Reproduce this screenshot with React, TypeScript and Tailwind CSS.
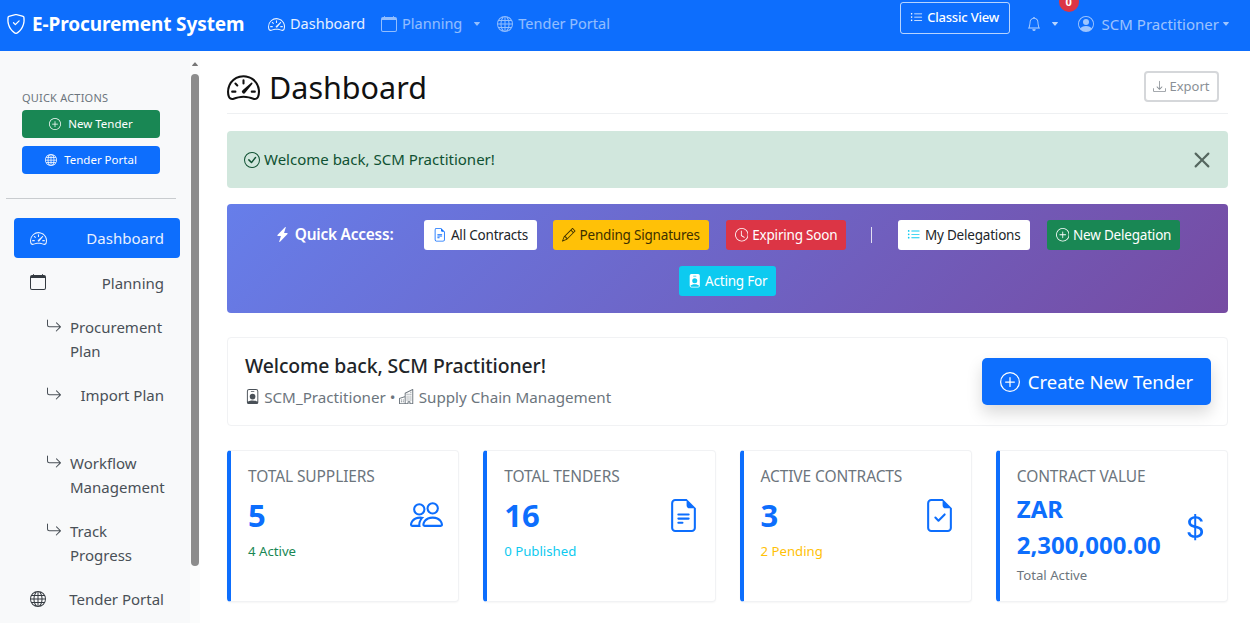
import React from "react";
import {
  BsShieldCheck, BsSpeedometer2, BsCalendar, BsGlobe, BsCaretDownFill, BsListUl, BsBell, BsPersonCircle,
  BsPlusCircle, BsArrowReturnRight, BsDownload, BsCheckCircle, BsLightningChargeFill, BsFileEarmarkText,
  BsPencil, BsClock, BsPersonBadgeFill, BsPersonBadge, BsBuildings, BsPeople, BsFileEarmarkCheck, BsCurrencyDollar, BsX, BsCaretUpFill,
} from "react-icons/bs";

function SubItem({ label, right }: { label: string; right?: boolean }) {
  return (
    <div className="h-[68px] pl-[46px] pr-[26px] py-[10px] flex items-start text-[#495057] text-[15px] leading-[24px]">
      <BsArrowReturnRight className="text-[16px] mt-[3px] shrink-0" />
      {right ? <span className="ml-auto">{label}</span> : <span className="ml-[8px]">{label}</span>}
    </div>
  );
}

function Stat({ title, children, sub, subClass, icon }: { title: string; children: React.ReactNode; sub: string; subClass: string; icon: React.ReactNode }) {
  return (
    <div className="h-[152px] bg-white border border-[#f1f2f4] border-l-4 border-l-[#0d6efd] rounded-[4px] pl-[17px] pr-[15px] pt-[15px] shadow-[0_1px_2px_rgba(0,0,0,0.04)]">
      <div className="text-[15.5px] leading-[20px] text-[#6c757d] tracking-[-0.1px]">{title}</div>
      <div className="flex items-start justify-between">
        <div>
          {children}
          <div className={`text-[13.2px] leading-[20px] ${subClass}`}>{sub}</div>
        </div>
        <div className="text-[#0d6efd]">{icon}</div>
      </div>
    </div>
  );
}

const btn = "h-[30px] px-[9px] rounded-[3px] flex items-center gap-[4px] text-[13.5px] whitespace-nowrap tracking-[-0.2px]";

export default function App() {
  return (
    <div className="h-[623px] w-[1250px] overflow-hidden bg-white flex flex-col font-['Noto_Sans','Open_Sans',sans-serif]">
      <nav className="h-[51px] shrink-0 bg-[#0d6efd] flex items-center text-white pl-[6px] pr-[20px] pb-[3px]">
        <BsShieldCheck className="text-[20px] mr-[6px]" />
        <span className="text-[19px] font-bold tracking-[-0.1px] w-[212px] whitespace-nowrap">E-Procurement System</span>
        <div className="flex items-center gap-[5px] ml-[24px] text-[14.5px] text-white/90">
          <BsSpeedometer2 className="text-[17px]" /> Dashboard
        </div>
        <div className="flex items-center gap-[5px] ml-[16px] text-[14.5px] text-white/55">
          <BsCalendar className="text-[16px]" /> Planning <BsCaretDownFill className="text-[8px] ml-[6px]" />
        </div>
        <div className="flex items-center gap-[5px] ml-[16px] text-[14.5px] text-white/55">
          <BsGlobe className="text-[16px]" /> Tender Portal
        </div>
        <div className="ml-auto h-[32px] w-[110px] -mt-[13px] border border-white/70 rounded-[3px] flex items-center justify-center gap-[4px] text-[13px] font-medium tracking-[-0.2px]">
          <BsListUl className="text-[13px]" /> Classic View
        </div>
        <div className="relative flex items-center ml-[17px] text-white/70">
          <BsBell className="text-[14px]" />
          <BsCaretDownFill className="text-[8px] ml-[10px]" />
          <span className="absolute -top-[25px] left-[32px] w-[20px] h-[20px] rounded-full bg-[#dc3545] text-white text-[11px] font-bold flex items-center justify-center">0</span>
        </div>
        <div className="flex items-center ml-[19px] text-[15px] text-white/60">
          <BsPersonCircle className="text-[16px] mr-[8px]" /> SCM Practitioner
          <BsCaretDownFill className="text-[8px] ml-[3px]" />
        </div>
      </nav>

      <div className="flex flex-1 min-h-0">
        <aside className="w-[190px] shrink-0 bg-[#f8f9fa] overflow-hidden pt-[39px]">
          <div className="pl-[22px] pr-[30px]">
            <div className="text-[11px] leading-[16px] text-[#6c757d] tracking-[0.2px] uppercase">Quick Actions</div>
            <div className="h-[28px] mt-[4px] bg-[#198754] rounded-[4px] text-white text-[11.5px] flex items-center justify-center gap-[7px]">
              <BsPlusCircle className="text-[12px]" /> New Tender
            </div>
            <div className="h-[28px] mt-[8px] bg-[#0d6efd] rounded-[4px] text-white text-[11.5px] flex items-center justify-center gap-[7px]">
              <BsGlobe className="text-[12px]" /> Tender Portal
            </div>
          </div>
          <div className="mt-[24px] ml-[6px] mr-[14px] border-t border-[#c9cccf]" />
          <div className="ml-[14px] mr-[10px] mt-[19px] h-[40px] bg-[#0d6efd] rounded-[4px] text-[#e8f0ff] text-[15px] flex items-center justify-between pl-[16px] pr-[16px]">
            <BsSpeedometer2 className="text-[17px]" /> Dashboard
          </div>
          <div className="h-[44px] mt-[3px] pl-[30px] pr-[26px] flex items-center justify-between text-[#495057] text-[15px]">
            <BsCalendar className="text-[16px] text-[#343a40] -mt-[2px]" /> Planning
          </div>
          <SubItem label="Procurement Plan" />
          <SubItem label="Import Plan" right />
          <SubItem label="Workflow Management" />
          <SubItem label="Track Progress" />
          <div className="h-[44px] pl-[30px] pr-[26px] flex items-center justify-between text-[#495057] text-[15px]">
            <BsGlobe className="text-[16px] text-[#343a40]" /> Tender Portal
          </div>
        </aside>

        <div className="w-[10px] shrink-0 bg-[#fbfcfc] flex flex-col items-center pt-[9px]">
          <BsCaretUpFill className="text-[8px] text-[#777]" />
          <div className="w-[8px] h-[492px] mt-[6px] rounded-full bg-[#8c8c8c]" />
        </div>

        <main className="flex-1 min-w-0 pl-[27px] pr-[22px]">
          <div className="h-[63px] border-b border-[#eef0f2] flex items-start justify-between pt-[15px]">
            <h1 className="flex items-center gap-[9px] text-[30.5px] leading-[42px] text-[#111] font-normal">
              <BsSpeedometer2 className="text-[33px]" /> Dashboard
            </h1>
            <div className="mt-[5px] mr-[9px] h-[31px] w-[75px] border-2 border-[#d5d7da] rounded-[4px] text-[#8a9096] text-[13px] flex items-center justify-center gap-[3px]">
              <BsDownload className="text-[13px]" /> Export
            </div>
          </div>

          <div className="mt-[17px] h-[57px] bg-[#d1e7dd] rounded-[4px] flex items-center justify-between pl-[17px] pr-[9px] text-[#0f5132] text-[15px]">
            <span className="flex items-center gap-[4px]"><BsCheckCircle className="text-[16px]" /> Welcome back, SCM Practitioner!</span>
            <BsX className="text-[34px] text-[#55675f]" />
          </div>

          <div className="mt-[16px] h-[109px] rounded-[4px] bg-[linear-gradient(135deg,#667eea,#764ba2)] pt-[16px] flex flex-wrap justify-center content-start items-center gap-y-[8px]">
            <span className="flex items-center gap-[5px] text-white text-[15.4px] font-semibold mr-[31px] tracking-[-0.2px]">
              <BsLightningChargeFill className="text-[15px]" /> Quick Access:
            </span>
            <span className={`${btn} bg-white text-[#212529] mr-[16px]`}><BsFileEarmarkText className="text-[#0d6efd]" /> All Contracts</span>
            <span className={`${btn} bg-[#ffc107] text-[#3d3000] mr-[17px]`}><BsPencil /> Pending Signatures</span>
            <span className={`${btn} bg-[#dc3545] text-white mr-[25px]`}><BsClock /> Expiring Soon</span>
            <span className="w-px h-[16px] bg-white/80 mr-[26px]" />
            <span className={`${btn} bg-white text-[#212529] mr-[17px]`}><BsListUl className="text-[#0dcaf0]" /> My Delegations</span>
            <span className={`${btn} bg-[#198754] text-white`}><BsPlusCircle /> New Delegation</span>
            <span className="basis-full h-0" />
            <span className={`${btn} bg-[#0dcaf0] text-white`}><BsPersonBadgeFill /> Acting For</span>
          </div>

          <div className="mt-[24px] h-[89px] border border-[#f1f2f4] rounded-[4px] flex items-center justify-between pl-[17px] pr-[16px]">
            <div className="-mt-[3px]">
              <div className="text-[19.4px] leading-[26px] font-medium text-[#212529] tracking-[-0.1px]">Welcome back, SCM Practitioner!</div>
              <div className="mt-[7px] flex items-center text-[15.2px] leading-[22px] text-[#6c757d] gap-[4px]">
                <BsPersonBadge className="text-[#495057]" /> SCM_Practitioner • <BsBuildings /> Supply Chain Management
              </div>
            </div>
            <div className="h-[47px] w-[229px] bg-[#0d6efd] rounded-[5px] text-white text-[18.5px] flex items-center justify-center gap-[8px] shadow-[0_8px_16px_rgba(0,0,0,0.15)]">
              <BsPlusCircle className="text-[20px]" /> Create New Tender
            </div>
          </div>

          <div className="mt-[24px] grid grid-cols-4 gap-[24px]">
            <Stat title="TOTAL SUPPLIERS" sub="4 Active" subClass="text-[#198754] mt-[4px]" icon={<BsPeople className="text-[33px] mt-[12px]" />}>
              <div className="mt-[7px] text-[31px] leading-[44px] font-bold text-[#0d6efd]">5</div>
            </Stat>
            <Stat title="TOTAL TENDERS" sub="0 Published" subClass="text-[#0dcaf0] mt-[4px]" icon={<BsFileEarmarkText className="text-[33px] mt-[13px]" />}>
              <div className="mt-[7px] text-[31px] leading-[44px] font-bold text-[#0d6efd]">16</div>
            </Stat>
            <Stat title="ACTIVE CONTRACTS" sub="2 Pending" subClass="text-[#ffc107] mt-[4px]" icon={<BsFileEarmarkCheck className="text-[33px] mt-[13px]" />}>
              <div className="mt-[7px] text-[31px] leading-[44px] font-bold text-[#0d6efd]">3</div>
            </Stat>
            <Stat title="CONTRACT VALUE" sub="Total Active" subClass="text-[#6c757d] mt-[2px]" icon={<BsCurrencyDollar className="text-[30px] mt-[26px] mr-[2px]" />}>
              <div className="mt-[5px] text-[24px] leading-[36px] font-bold text-[#0d6efd]">ZAR<br />2,300,000.00</div>
            </Stat>
          </div>
        </main>
      </div>
    </div>
  );
}
